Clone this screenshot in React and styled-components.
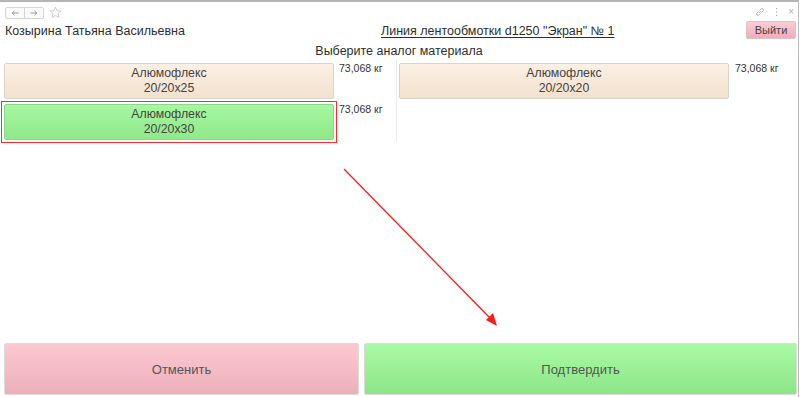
import React from "react";
import styled, { createGlobalStyle } from "styled-components";

const Global = createGlobalStyle`
  html, body { margin: 0; padding: 0; background: #fff; overflow: hidden; }
  body { font-family: "Liberation Sans", Arial, sans-serif; color: #333; }
`;

const Frame = styled.div`
  position: relative;
  box-sizing: border-box;
  width: 799px;
  height: 397px;
  border-top: 2px solid #b4b4b4;
  border-right: 1px solid #bdbdbd;
  display: flex;
  flex-direction: column;
  background: #fff;
`;

const Toolbar = styled.div`
  height: 19px;
  display: flex;
  align-items: center;
  padding: 0 4px 0 5px;
`;

const NavGroup = styled.div`
  display: flex;
  height: 10px;
  margin-top: 2px;
  border: 1px solid #d6d6d6;
  border-radius: 2px;
  background: #fafafa;
`;

const NavBtn = styled.div`
  width: 18px;
  display: flex;
  align-items: center;
  justify-content: center;
  & + & { border-left: 1px solid #d6d6d6; }
`;

const StarIcon = styled.svg`
  margin-left: 5px;
  margin-top: 1px;
  display: block;
`;

const ToolSpacer = styled.div`flex: 1;`;

const ToolIcons = styled.div`
  display: flex;
  align-items: center;
  gap: 10px;
  color: #b0b0b0;
  font-size: 10px;
`;

const Header = styled.div`
  display: grid;
  grid-template-columns: 376px auto 1fr;
  align-items: start;
  height: 20px;
  padding: 0 2px 0 5px;
`;

const Person = styled.div`
  font-size: 12.5px;
  line-height: 20px;
  color: #2e2e2e;
`;

const LineLink = styled.a`
  font-size: 12.5px;
  line-height: 20px;
  color: #2e2e2e;
  text-decoration: underline;
  text-underline-offset: 2px;
`;

const ExitButton = styled.button`
  justify-self: end;
  width: 50px;
  height: 18px;
  padding: 0;
  border: 1px solid #dcc5ca;
  border-radius: 2px;
  background: linear-gradient(#fbcdd5, #f3acb8);
  font-family: inherit;
  font-size: 11px;
  color: #444;
`;

const Subtitle = styled.div`
  text-align: center;
  font-size: 12.5px;
  color: #2e2e2e;
  padding-top: 3px;
  height: 16px;
`;

const Columns = styled.div`
  display: grid;
  grid-template-columns: 396px 1px 1fr;
`;

const Divider = styled.div`
  background: #ececec;
  height: 82px;
`;

const Column = styled.div`
  display: flex;
  flex-direction: column;
`;

const Item = styled.div`
  display: flex;
  align-items: flex-start;
  margin-top: ${p => (p.$first ? 0 : -1)}px;
`;

const Outline = styled.div`
  box-sizing: border-box;
  padding: 2px;
  border: 1px solid ${p => (p.$selected ? "#ff2a2a" : "transparent")};
  margin-left: ${p => p.$ml}px;
`;

const MatButton = styled.button`
  box-sizing: border-box;
  width: ${p => p.$w}px;
  height: 36px;
  padding: 0;
  border: 1px solid ${p => (p.$green ? "#8fd68a" : "#dcd3c9")};
  border-radius: 2px;
  background: ${p =>
    p.$green
      ? "linear-gradient(#a7f8a1, #8fe889)"
      : "linear-gradient(#fcf0e4, #f2e1cd)"};
  font-family: inherit;
  font-size: 12.3px;
  line-height: 15px;
  color: #444;
  display: flex;
  flex-direction: column;
  align-items: center;
  justify-content: center;
`;

const Weight = styled.div`
  font-size: 10.5px;
  color: #333;
  margin-left: ${p => p.$ml}px;
  padding-top: ${p => p.$pt}px;
`;

const Spacer = styled.div`flex: 1;`;

const Footer = styled.div`
  display: grid;
  grid-template-columns: 355px 1fr;
  gap: 5px;
  padding: 0 1px 2px 4px;
`;

const BigButton = styled.button`
  height: 52px;
  border: 1px solid #dcdcdc;
  border-radius: 2px;
  background: ${p =>
    p.$tone === "red"
      ? "linear-gradient(#fdc8d1, #ecb0b9)"
      : "linear-gradient(#a9faa4, #8de588)"};
  font-family: inherit;
  font-size: 13px;
  color: #555;
`;

const Arrow = styled.svg`
  position: absolute;
  left: 0;
  top: -2px;
  pointer-events: none;
`;

const materials = {
  left: [
    { name: "Алюмофлекс", size: "20/20x25", green: false },
    { name: "Алюмофлекс", size: "20/20x30", green: true },
  ],
  right: [{ name: "Алюмофлекс", size: "20/20x20", green: false }],
};

const NavArrow = ({ dir }) => (
  <svg width="8" height="6" viewBox="0 0 8 6" fill="none" stroke="#9a9a9a" strokeWidth="1">
    {dir === "left" ? (
      <>
        <path d="M1 3 H7.5" />
        <path d="M3.5 0.8 L1.2 3 L3.5 5.2" />
      </>
    ) : (
      <>
        <path d="M0.5 3 H7" />
        <path d="M4.5 0.8 L6.8 3 L4.5 5.2" />
      </>
    )}
  </svg>
);

export default function App() {
  return (
    <>
      <Global />
      <Frame>
        <Toolbar>
          <NavGroup>
            <NavBtn><NavArrow dir="left" /></NavBtn>
            <NavBtn><NavArrow dir="right" /></NavBtn>
          </NavGroup>
          <StarIcon width="13" height="13" viewBox="0 0 24 24" fill="none" stroke="#c4c4c4" strokeWidth="1.6" strokeLinejoin="round">
            <polygon points="12,2 14.9,8.6 22,9.3 16.6,14 18.2,21 12,17.3 5.8,21 7.4,14 2,9.3 9.1,8.6" />
          </StarIcon>
          <ToolSpacer />
          <ToolIcons>
            <svg width="10" height="10" viewBox="0 0 10 10" fill="none" stroke="#b8b8b8" strokeWidth="1">
              <path d="M4 6 L6 4" />
              <path d="M3.5 4.5 L2 6 a1.4 1.4 0 0 0 2 2 L5.5 6.5" />
              <path d="M4.5 3.5 L6 2 a1.4 1.4 0 0 1 2 2 L6.5 5.5" />
            </svg>
            <svg width="3" height="10" viewBox="0 0 3 10">
              <rect x="1" y="1" width="1.2" height="1.2" fill="#aaa" />
              <rect x="1" y="4.4" width="1.2" height="1.2" fill="#aaa" />
              <rect x="1" y="7.8" width="1.2" height="1.2" fill="#aaa" />
            </svg>
            <span>×</span>
          </ToolIcons>
        </Toolbar>
        <Header>
          <Person>Козырина Татьяна Васильевна</Person>
          <LineLink>Линия лентообмотки d1250 "Экран" № 1</LineLink>
          <ExitButton>Выйти</ExitButton>
        </Header>
        <Subtitle>Выберите аналог материала</Subtitle>
        <Columns>
          <Column>
            {materials.left.map((m, i) => (
              <Item key={i} $first={i === 0}>
                <Outline $selected={m.green} $ml={1}>
                  <MatButton $w={330} $green={m.green}>
                    <span>{m.name}</span>
                    <span>{m.size}</span>
                  </MatButton>
                </Outline>
                <Weight $ml={2} $pt={2}>73,068 кг</Weight>
              </Item>
            ))}
          </Column>
          <Divider />
          <Column>
            {materials.right.map((m, i) => (
              <Item key={i} $first={i === 0}>
                <Outline $selected={false} $ml={-1}>
                  <MatButton $w={330} $green={m.green}>
                    <span>{m.name}</span>
                    <span>{m.size}</span>
                  </MatButton>
                </Outline>
                <Weight $ml={3} $pt={2}>73,068 кг</Weight>
              </Item>
            ))}
          </Column>
        </Columns>
        <Spacer />
        <Footer>
          <BigButton $tone="red">Отменить</BigButton>
          <BigButton $tone="green">Подтвердить</BigButton>
        </Footer>
        <Arrow width="800" height="397" viewBox="0 0 800 397">
          <line x1="344" y1="169" x2="490" y2="318" stroke="#ff1a1a" strokeWidth="1.3" />
          <polygon points="497,326 486,320 493,313" fill="#ff1a1a" />
        </Arrow>
      </Frame>
    </>
  );
}
